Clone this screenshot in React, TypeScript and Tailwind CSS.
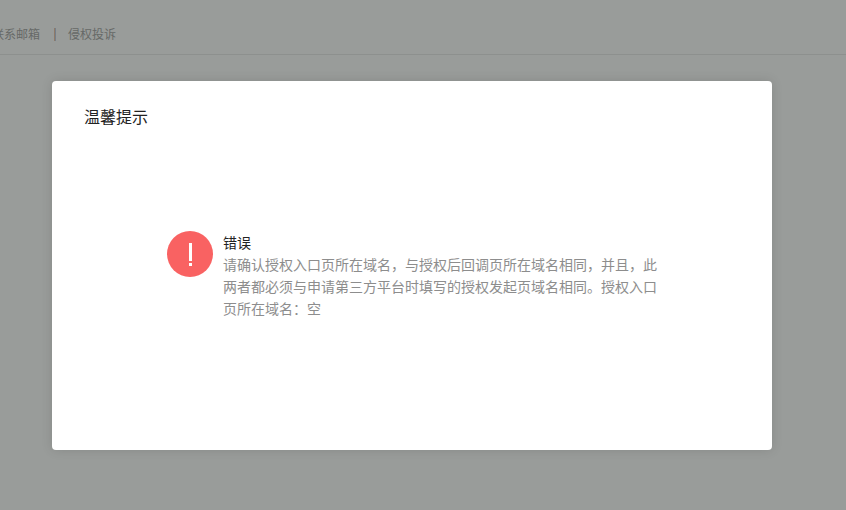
import React from "react";

function TopBar() {
  return (
    <header className="flex h-[55px] items-center overflow-hidden border-b border-[#8d908e] pt-[14px] text-xs text-[#666967]">
      <nav className="-ml-2 flex items-center whitespace-nowrap">
        <a href="#contact">联系邮箱</a>
        <span aria-hidden="true" className="mr-3 ml-[14px] flex h-[13px] w-0.5">
          <span className="w-px bg-[#8f7a68]" />
          <span className="w-px bg-[#757f8a]" />
        </span>
        <a href="#complaint">侵权投诉</a>
      </nav>
    </header>
  );
}

function ErrorIcon() {
  return (
    <svg viewBox="0 0 46 46" className="size-[46px] shrink-0" aria-hidden="true">
      <circle cx="23" cy="23" r="23" fill="#f96262" />
      <rect x="22" y="12" width="3" height="18" fill="#fff" />
      <rect x="22" y="32" width="3" height="3" fill="#fff" />
    </svg>
  );
}

function ErrorDialog() {
  return (
    <section
      role="dialog"
      aria-labelledby="dialog-title"
      className="flex min-h-[369px] w-full flex-col rounded bg-white px-8 pt-6 shadow-[0_0_12px_rgba(0,0,0,0.12)]"
    >
      <h1 id="dialog-title" className="text-base leading-[22px] text-[#222222]">
        温馨提示
      </h1>
      <div className="mx-auto mt-[104px] flex w-full max-w-[490px] gap-[10px]">
        <ErrorIcon />
        <div className="w-[436px] text-sm leading-[22px]">
          <h2 className="text-[#222222]">错误</h2>
          <p className="text-[#8d8d8d]">
            请确认授权入口页所在域名，与授权后回调页所在域名相同，并且，此两者都必须与申请第三方平台时填写的授权发起页域名相同。授权入口页所在域名：空
          </p>
        </div>
      </div>
    </section>
  );
}

export default function App() {
  return (
    <div
      lang="zh-CN"
      className='min-h-screen bg-[#999c9a] font-["Noto_Sans_CJK_SC",sans-serif]'
    >
      <TopBar />
      <main className="pt-[26px] pr-[74px] pl-[52px]">
        <ErrorDialog />
      </main>
    </div>
  );
}
